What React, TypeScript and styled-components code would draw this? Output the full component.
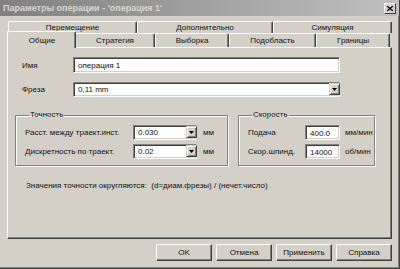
import { FC } from "react";
import styled, { createGlobalStyle } from "styled-components";

const GlobalStyle = createGlobalStyle`
  html, body { margin:0; padding:0; background:#d4d0c8; }
  body { font-family:"Liberation Sans", Arial, sans-serif; font-size:8px; color:#111; }
`;

const Window = styled.div`
  width:400px;
  height:269px;
  box-sizing:border-box;
  background:#d4d0c8;
  display:flex;
  flex-direction:column;
  border-right:1px solid #404040;
  border-bottom:1px solid #404040;
  box-shadow:inset -1px -1px 0 #808080;
  overflow:hidden;
`;

const TitleBar = styled.div`
  height:16px;
  flex:none;
  display:flex;
  align-items:center;
  justify-content:space-between;
  padding:0 3px 0 3px;
  background:linear-gradient(to right, #808080, #c0c0c0);
`;

const TitleText = styled.span`
  color:#d8d5d0;
  font-weight:bold;
  font-size:9px;
`;

const CloseBtn = styled.div`
  width:12px;
  height:11px;
  box-sizing:border-box;
  background:#d4d0c8;
  border-top:1px solid #fff;
  border-left:1px solid #fff;
  border-right:1px solid #404040;
  border-bottom:1px solid #404040;
  display:flex;
  align-items:center;
  justify-content:center;
`;

const Body = styled.div`
  flex:1;
  display:flex;
  flex-direction:column;
  padding:5px 7px 0 7px;
`;

const TabRow = styled.div<{ $h: number }>`
  display:flex;
  height:${p => p.$h}px;
  margin-left:1px;
  width:384px;
  align-items:flex-end;
  position:relative;
`;

const Tab = styled.div<{ $w: number; $active?: boolean }>`
  width:${p => p.$w}px;
  height:${p => (p.$active ? "calc(100% + 3px)" : "100%")};
  margin:${p => (p.$active ? "0 -1px -1px -1px" : "0")};
  padding-left:${p => (p.$active ? "1px" : "0")};
  box-sizing:border-box;
  border-top:1px solid #fff;
  border-left:1px solid #fff;
  border-right:1px solid #404040;
  box-shadow:inset -1px 0 0 #808080;
  border-top-left-radius:2px;
  border-top-right-radius:2px;
  background:#d4d0c8;
  display:flex;
  align-items:center;
  justify-content:center;
  white-space:nowrap;
  z-index:${p => (p.$active ? 2 : 1)};
  position:relative;
`;

const Panel = styled.div`
  height:192px;
  box-sizing:border-box;
  border-top:1px solid #fff;
  border-left:1px solid #fff;
  border-right:1px solid #404040;
  border-bottom:1px solid #404040;
  box-shadow:inset -1px -1px 0 #808080;
  padding:9px 7px 0 7px;
  display:flex;
  flex-direction:column;
`;

const FormRow = styled.div<{ $mt?: number }>`
  display:flex;
  align-items:center;
  padding-left:7px;
  margin-top:${p => p.$mt ?? 0}px;
`;

const Label = styled.span<{ $w: number }>`
  width:${p => p.$w}px;
  flex:none;
  white-space:nowrap;
`;

const Field = styled.div<{ $w: number; $h?: number }>`
  width:${p => p.$w}px;
  height:${p => p.$h ?? 15}px;
  box-sizing:border-box;
  background:#fff;
  border-top:1px solid #808080;
  border-left:1px solid #808080;
  border-right:1px solid #fff;
  border-bottom:1px solid #fff;
  box-shadow:inset 1px 1px 0 #404040, inset -1px -1px 0 #d4d0c8;
  display:flex;
  align-items:center;
  padding:2px 2px 1px 4px;
  flex:none;
`;

const FieldText = styled.span`
  flex:1;
  white-space:nowrap;
`;

const DropBtn = styled.div`
  width:11px;
  align-self:stretch;
  box-sizing:border-box;
  background:#d4d0c8;
  border-top:1px solid #d4d0c8;
  border-left:1px solid #d4d0c8;
  border-right:1px solid #404040;
  border-bottom:1px solid #404040;
  box-shadow:inset 1px 1px 0 #fff, inset -1px -1px 0 #808080;
  display:flex;
  align-items:center;
  justify-content:center;
  margin:-1px -1px 0 0;
`;

const Groups = styled.div`
  display:flex;
  gap:10px;
  margin-top:13px;
`;

const Group = styled.fieldset<{ $w: number }>`
  width:${p => p.$w}px;
  height:56px;
  box-sizing:border-box;
  margin:0;
  padding:5px 0 0 9px;
  border:1px solid #808080;
  box-shadow:1px 1px 0 #fff, inset 1px 1px 0 #fff;
  display:flex;
  flex-direction:column;
  gap:4px;
  legend {
    padding:0 1px;
    margin-left:4px;
    line-height:10px;
  }
`;

const GroupRow = styled.div`
  display:flex;
  align-items:center;
`;

const Unit = styled.span<{ $ml?: number }>`
  margin-left:${p => p.$ml ?? 6}px;
  white-space:nowrap;
`;

const Note = styled.div`
  margin-top:15px;
  padding-left:11px;
  white-space:nowrap;
`;

const Buttons = styled.div`
  display:flex;
  justify-content:flex-end;
  gap:4px;
  margin-top:5px;
`;

const Button = styled.div`
  width:56px;
  height:17px;
  box-sizing:border-box;
  background:#d4d0c8;
  border-top:1px solid #fff;
  border-left:1px solid #fff;
  border-right:1px solid #404040;
  border-bottom:1px solid #404040;
  box-shadow:inset -1px -1px 0 #808080;
  display:flex;
  align-items:center;
  justify-content:center;
`;

const Arrow: FC = () => (
  <svg width="5" height="3" viewBox="0 0 5 3">
    <polygon points="0,0 5,0 2.5,3" fill="#000" />
  </svg>
);

const Combo: FC<{ w: number; value: string; h?: number }> = ({ w, value, h }) => (
  <Field $w={w} $h={h} style={{ paddingRight: 0, paddingTop: 1, paddingBottom: 1 }}>
    <FieldText>{value}</FieldText>
    <DropBtn><Arrow /></DropBtn>
  </Field>
);

const App: FC = () => {
  return (
    <Window>
      <GlobalStyle />
      <TitleBar>
        <TitleText>Параметры операции - 'операция 1'</TitleText>
        <CloseBtn>
          <svg width="6" height="5" viewBox="0 0 6 5">
            <path d="M0 0 L6 5 M6 0 L0 5" stroke="#000" strokeWidth="1.3" />
          </svg>
        </CloseBtn>
      </TitleBar>
      <Body>
        <TabRow $h={12}>
          <Tab $w={129}>Перемещение</Tab>
          <Tab $w={136}>Дополнительно</Tab>
          <Tab $w={119}>Симуляция</Tab>
        </TabRow>
        <TabRow $h={14}>
          <Tab $w={69} $active>Общие</Tab>
          <Tab $w={80}>Стратегия</Tab>
          <Tab $w={74}>Выборка</Tab>
          <Tab $w={87}>Подобласть</Tab>
          <Tab $w={74}>Границы</Tab>
        </TabRow>
        <Panel>
          <FormRow>
            <Label $w={51}>Имя</Label>
            <Field $w={267} $h={16}><FieldText>операция 1</FieldText></Field>
          </FormRow>
          <FormRow $mt={9}>
            <Label $w={51}>Фреза</Label>
            <Combo w={267} value="0,11 mm" />
          </FormRow>
          <Groups>
            <Group $w={213}>
              <legend>Точность</legend>
              <GroupRow>
                <Label $w={108}>Расст. между траект.инст.</Label>
                <Combo w={64} value="0.030" />
                <Unit>мм</Unit>
              </GroupRow>
              <GroupRow>
                <Label $w={108}>Дискретность по траект.</Label>
                <Combo w={64} value="0.02" />
                <Unit>мм</Unit>
              </GroupRow>
            </Group>
            <Group $w={137}>
              <legend>Скорость</legend>
              <GroupRow>
                <Label $w={57}>Подача</Label>
                <Field $w={35}><FieldText>400.0</FieldText></Field>
                <Unit $ml={5}>мм/мин</Unit>
              </GroupRow>
              <GroupRow>
                <Label $w={57}>Скор.шпинд.</Label>
                <Field $w={35}><FieldText>14000</FieldText></Field>
                <Unit $ml={5}>об/мин</Unit>
              </GroupRow>
            </Group>
          </Groups>
          <Note>Значения точности округляются:&nbsp; (d=диам.фрезы) / (нечет.число)</Note>
        </Panel>
        <Buttons>
          <Button>OK</Button>
          <Button>Отмена</Button>
          <Button>Применить</Button>
          <Button>Справка</Button>
        </Buttons>
      </Body>
    </Window>
  );
};

export default App;
